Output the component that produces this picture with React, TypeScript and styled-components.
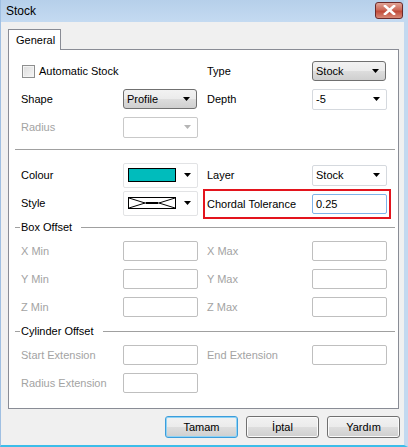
import React from "react";
import styled, { createGlobalStyle } from "styled-components";

const Global = createGlobalStyle`
  html, body { margin: 0; padding: 0; background: #f0f0f0; }
  * { box-sizing: border-box; }
`;

const Arrow = ({ color = "#000" }: { color?: string }) => (
  <svg width="7" height="4" viewBox="0 0 7 4">
    <polygon points="0,0 7,0 3.5,4" fill={color} />
  </svg>
);

const App = () => {
  return (
    <Window>
      <Global />
      <TitleBar>
        <Title>Stock</Title>
        <CloseBtn>
          <svg width="13" height="10" viewBox="0 0 13 10">
            <path d="M2 1 L11 9 M11 1 L2 9" stroke="#fff" strokeWidth="2.6" strokeLinecap="square" />
          </svg>
        </CloseBtn>
      </TitleBar>
      <Client>
        <TabStrip>
          <Tab>General</Tab>
        </TabStrip>
        <Panel>
          <Row>
            <Half>
              <CheckWrap>
                <CheckBox />
                <Label>Automatic Stock</Label>
              </CheckWrap>
            </Half>
            <Half $right>
              <Label $w={105}>Type</Label>
              <DropButton>
                <span>Stock</span>
                <Arrow />
              </DropButton>
            </Half>
          </Row>
          <Row>
            <Half>
              <Label $w={102}>Shape</Label>
              <DropButton>
                <span>Profile</span>
                <Arrow />
              </DropButton>
            </Half>
            <Half $right>
              <Label $w={105}>Depth</Label>
              <Combo>
                <span>-5</span>
                <Arrow />
              </Combo>
            </Half>
          </Row>
          <Row>
            <Half>
              <Label $w={102} $disabled>Radius</Label>
              <Combo $disabled>
                <span />
                <Arrow color="#b5b5b5" />
              </Combo>
            </Half>
          </Row>
          <Separator />
          <Row>
            <Half>
              <Label $w={102}>Colour</Label>
              <SwatchCombo>
                <Swatch />
                <Arrow />
              </SwatchCombo>
            </Half>
            <Half $right>
              <Label $w={105}>Layer</Label>
              <Combo>
                <span>Stock</span>
                <Arrow />
              </Combo>
            </Half>
          </Row>
          <Row>
            <Half>
              <Label $w={102}>Style</Label>
              <SwatchCombo>
                <StyleBox>
                  <svg width="46" height="10" viewBox="0 0 46 10">
                    <path d="M0 0 L16 5 L0 10 M16 5 L30 5 M46 0 L30 5 L46 10" stroke="#000" strokeWidth="1" fill="none" />
                    <path d="M17 5 L29 5" stroke="#000" strokeWidth="2" />
                  </svg>
                </StyleBox>
                <Arrow />
              </SwatchCombo>
            </Half>
            <Highlight>
              <Label $w={105}>Chordal Tolerance</Label>
              <TextBox $focus>0.25</TextBox>
            </Highlight>
          </Row>
          <GroupHead>
            <GroupText>Box Offset</GroupText>
          </GroupHead>
          {["X", "Y", "Z"].map((a) => (
            <Row key={a}>
              <Half>
                <Label $w={102} $disabled>{a} Min</Label>
                <TextBox $disabled />
              </Half>
              <Half $right>
                <Label $w={105} $disabled>{a} Max</Label>
                <TextBox $disabled />
              </Half>
            </Row>
          ))}
          <GroupHead>
            <GroupText>Cylinder Offset</GroupText>
          </GroupHead>
          <Row>
            <Half>
              <Label $w={102} $disabled>Start Extension</Label>
              <TextBox $disabled />
            </Half>
            <Half $right>
              <Label $w={105} $disabled>End Extension</Label>
              <TextBox $disabled />
            </Half>
          </Row>
          <Row>
            <Half>
              <Label $w={102} $disabled>Radius Extension</Label>
              <TextBox $disabled />
            </Half>
          </Row>
        </Panel>
        <Buttons>
          <Button $default>Tamam</Button>
          <Button>İptal</Button>
          <Button>Yardım</Button>
        </Buttons>
      </Client>
    </Window>
  );
};

export default App;

const Window = styled.div`
  width: 408px;
  height: 447px;
  display: flex;
  flex-direction: column;
  background: #f0f0f0;
  border-left: 1px solid #9fbfe2;
  border-right: 4px solid #c3d9f0;
  border-bottom: 2px solid #3cbde9;
  font-family: "Liberation Sans", Arial, sans-serif;
  font-size: 11px;
  color: #000;
  overflow: hidden;
`;

const TitleBar = styled.div`
  height: 22px;
  flex: none;
  display: flex;
  align-items: center;
  justify-content: space-between;
  padding: 0 1px 0 5px;
  background: linear-gradient(#b6cfea, #c4daf1);
`;

const Title = styled.div`
  font-size: 12px;
  color: #000;
  padding-bottom: 1px;
`;

const CloseBtn = styled.div`
  width: 28px;
  height: 17px;
  margin-top: -2px;
  border: 1px solid #6b2a2a;
  border-radius: 3px;
  background: linear-gradient(#e0a497, #cc6a59 45%, #c04a39 55%, #d88a78);
  display: flex;
  align-items: center;
  justify-content: center;
`;

const Client = styled.div`
  flex: 1;
  display: flex;
  flex-direction: column;
  padding: 7px 0 0 7px;
`;

const TabStrip = styled.div`
  display: flex;
  height: 20px;
  position: relative;
  z-index: 1;
`;

const Tab = styled.div`
  width: 53px;
  height: 21px;
  background: #fff;
  border: 1px solid #898c95;
  border-bottom: none;
  padding: 4px 0 0 7px;
`;

const Panel = styled.div`
  width: 391px;
  height: 360px;
  background: #fff;
  border: 1px solid #898c95;
  padding: 7px 3px 0 6px;
  display: flex;
  flex-direction: column;
`;

const Row = styled.div`
  height: 28px;
  display: flex;
  align-items: center;
  padding-left: 6px;
`;

const Half = styled.div<{ $right?: boolean }>`
  display: flex;
  align-items: center;
  width: ${(p) => (p.$right ? "180px" : "177px")};
  margin-left: ${(p) => (p.$right ? "9px" : "0")};
`;

const Label = styled.div<{ $w?: number; $disabled?: boolean }>`
  width: ${(p) => (p.$w ? `${p.$w}px` : "auto")};
  flex: none;
  color: ${(p) => (p.$disabled ? "#a3a3a3" : "#000")};
  white-space: nowrap;
`;

const CheckWrap = styled.div`
  display: flex;
  align-items: center;
  gap: 4px;
  margin-left: 1px;
`;

const CheckBox = styled.div`
  width: 13px;
  height: 13px;
  border: 1px solid #8e8f8f;
  background: linear-gradient(135deg, #dcdcdc, #f6f6f6);
  box-shadow: inset 0 0 0 1px #f4f4f4;
`;

const DropButton = styled.div`
  width: 74px;
  height: 20px;
  border: 1px solid #707070;
  border-radius: 3px;
  background: linear-gradient(#f2f2f2 0%, #ebebeb 50%, #dddddd 51%, #cfcfcf 100%);
  display: flex;
  align-items: center;
  justify-content: space-between;
  padding: 0 6px 0 3px;
`;

const Combo = styled.div<{ $disabled?: boolean }>`
  width: 75px;
  height: 21px;
  border: 1px solid ${(p) => (p.$disabled ? "#c9c9c9" : "#d5d9de")};
  border-radius: 2px;
  background: #fff;
  display: flex;
  align-items: center;
  justify-content: space-between;
  padding: 0 6px 0 3px;
`;

const SwatchCombo = styled.div`
  width: 75px;
  height: 25px;
  border: 1px solid #e2e3e5;
  border-radius: 2px;
  background: #fff;
  display: flex;
  align-items: center;
  justify-content: space-between;
  padding: 0 6px 0 4px;
`;

const Swatch = styled.div`
  width: 48px;
  height: 14px;
  border: 1px solid #000;
  background: #00bcbc;
`;

const StyleBox = styled.div`
  width: 48px;
  height: 12px;
  border: 1px solid #000;
  display: flex;
`;

const TextBox = styled.div<{ $disabled?: boolean; $focus?: boolean }>`
  width: 75px;
  height: 20px;
  border: 1px solid ${(p) => (p.$focus ? "#7eb4ea" : p.$disabled ? "#bfbfbf" : "#abadb3")};
  border-radius: 2px;
  background: #fff;
  padding: 3px 0 0 3px;
`;

const Highlight = styled.div`
  width: 188px;
  height: 30px;
  margin-left: 5px;
  margin-top: 1px;
  border: 2px solid #e3141d;
  display: flex;
  align-items: center;
  padding-left: 2px;
`;

const Separator = styled.div`
  height: 1px;
  background: #a0a0a0;
  margin: 8px 0 11px;
`;

const GroupHead = styled.div`
  height: 20px;
  display: flex;
  align-items: center;
  &::before {
    content: "";
    width: 5px;
    height: 1px;
    background: #a0a0a0;
    margin-top: 1px;
  }
  &::after {
    content: "";
    flex: 1;
    height: 1px;
    background: #a0a0a0;
    margin-left: 9px;
  }
`;

const GroupText = styled.div`
  color: #000;
  margin-left: 1px;
`;

const Buttons = styled.div`
  display: flex;
  justify-content: flex-end;
  gap: 8px;
  width: 392px;
  margin-top: 7px;
`;

const Button = styled.div<{ $default?: boolean }>`
  width: 73px;
  height: 22px;
  border: 1px solid ${(p) => (p.$default ? "#3c9ddb" : "#707070")};
  border-radius: 3px;
  box-shadow: ${(p) => (p.$default ? "inset 0 0 0 1px #8fd3f5" : "inset 0 0 0 1px #fbfbfb")};
  background: linear-gradient(#f2f2f2 0%, #ebebeb 50%, #dddddd 51%, #cfcfcf 100%);
  display: flex;
  align-items: center;
  justify-content: center;
`;
